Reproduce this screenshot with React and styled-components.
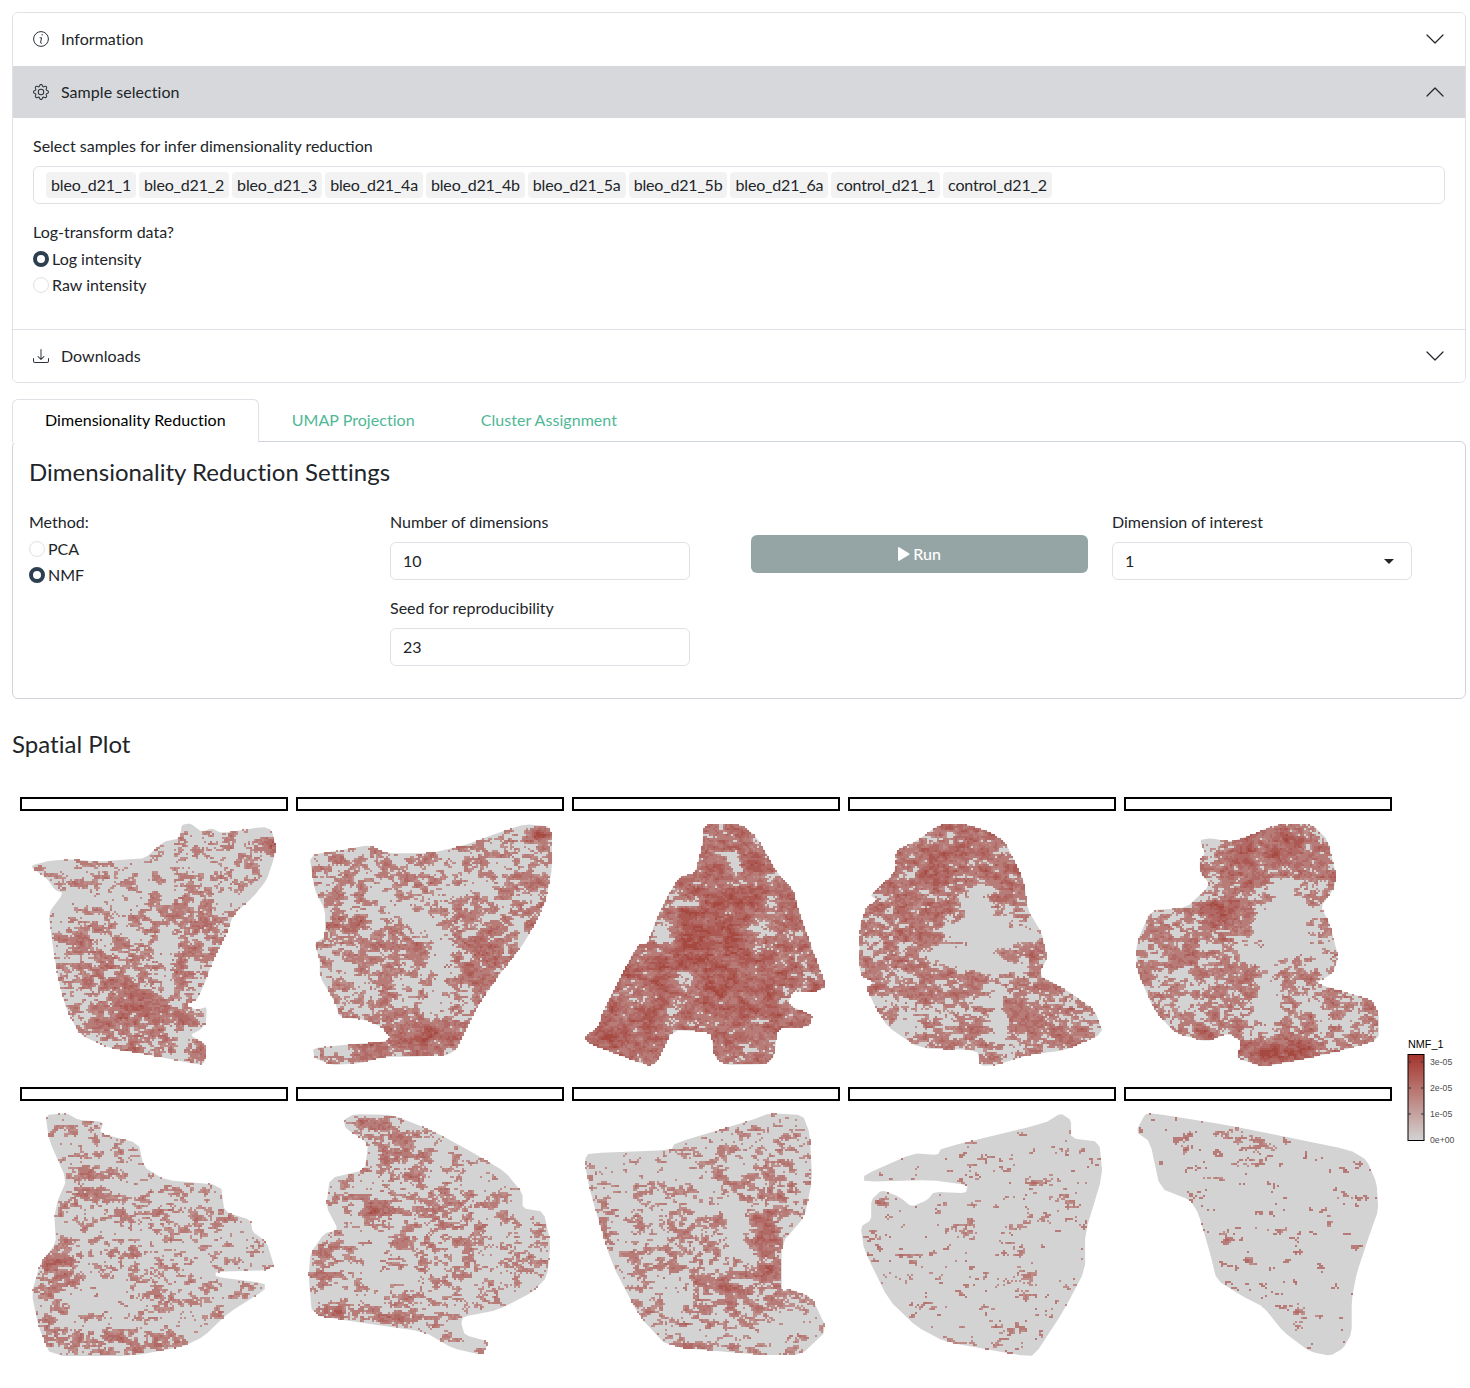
import React, { useMemo } from "react";
import styled, { createGlobalStyle } from "styled-components";
import { BsGear, BsDownload } from "react-icons/bs";

const Global = createGlobalStyle`
  html, body { margin: 0; padding: 0; background: #fff; }
  body { font-family: Lato, "Noto Sans", sans-serif; font-size: 16px; color: #212529; line-height: 1.5; }
  * { box-sizing: border-box; }
`;

const Page = styled.div`
  padding: 12px 4px 0 12px;
  width: 1470px;
  height: 1388px;
  overflow: hidden;
`;
const Accordion = styled.section`
  border: 1px solid #dee2e6;
  border-radius: 6px;
  overflow: hidden;
  background: #fff;
`;
const AccHeader = styled.div`
  display: flex;
  align-items: center;
  height: ${(p) => p.$h || 53}px;
  padding: 0 20px ${(p) => p.$pb || 0}px;
  background: ${(p) => (p.$active ? "#d6d8db" : "#fff")};
  color: #212529;
`;
const AccIcon = styled.span`
  display: flex;
  width: 16px;
  height: 16px;
  margin-right: 12px;
  font-size: 16px;
  color: #2b3238;
  svg { display: block; }
`;
const AccTitle = styled.span`
  flex: 1;
  letter-spacing: 0.05px;
`;
const Chevron = styled.svg`
  width: 20px;
  height: 20px;
  display: block;
`;
const AccBody = styled.div`
  padding: 16px 20px 0;
  height: 212px;
  border-bottom: 1px solid #dee2e6;
`;
const FieldLabel = styled.div`
  height: 24px;
  line-height: 24px;
  margin-bottom: ${(p) => p.$mb ?? 8}px;
`;
const ChipBox = styled.div`
  display: flex;
  align-items: center;
  gap: 3px;
  height: 38px;
  padding: 0 12px;
  border: 1px solid #dee2e6;
  border-radius: 6px;
  margin-bottom: 16px;
`;
const Chip = styled.span`
  height: 26px;
  line-height: 26px;
  padding: 0 5px;
  background: #f2f2f2;
  border-radius: 4px;
  white-space: nowrap;
  letter-spacing: -0.17px;
`;
const RadioRow = styled.label`
  display: flex;
  align-items: center;
  height: 26px;
  gap: 3px;
`;
const RadioDot = styled.span`
  width: 16px;
  height: 16px;
  border-radius: 50%;
  flex: none;
  background: #fff;
  border: ${(p) => (p.$on ? "4px solid #2c3e50" : "1px solid #dee2e6")};
`;
const TabBar = styled.nav`
  display: flex;
  margin-top: 16px;
  height: 43px;
  position: relative;
  z-index: 1;
  margin-bottom: -1px;
`;
const Tab = styled.div`
  padding: 0 32px;
  line-height: 40px;
  height: 44px;
  letter-spacing: 0.05px;
  border: 1px solid ${(p) => (p.$active ? "#dee2e6" : "transparent")};
  border-bottom-color: ${(p) => (p.$active ? "#fff" : "transparent")};
  border-radius: 6px 6px 0 0;
  background: ${(p) => (p.$active ? "#fff" : "transparent")};
  color: ${(p) => (p.$active ? "#000" : "#4fb896")};
`;
const SettingsBox = styled.section`
  height: 258px;
  border: 1px solid #ced4da;
  border-radius: 6px;
  padding: 15px 16px 16px;
`;
const SettingsTitle = styled.h3`
  margin: 0 0 24px;
  font-size: 24px;
  font-weight: 400;
  line-height: 29px;
  letter-spacing: 0.03px;
  color: #212529;
`;
const SettingsGrid = styled.div`
  display: grid;
  grid-template-columns: repeat(4, 337px);
  column-gap: 24px;
`;
const Column = styled.div`
  display: flex;
  flex-direction: column;
  align-items: flex-start;
`;
const RunColumn = styled(Column)`
  padding-top: 25px;
  align-items: stretch;
`;
const TextInput = styled.input`
  display: block;
  width: 300px;
  height: 38px;
  padding: 0 12px 2px;
  border: 1px solid #dee2e6;
  border-radius: 6px;
  font: inherit;
  color: #212529;
  outline: none;
  margin-bottom: 16px;
`;
const SelectBox = styled.div`
  display: flex;
  align-items: center;
  justify-content: space-between;
  width: 300px;
  height: 38px;
  padding: 0 12px;
  border: 1px solid #dee2e6;
  border-radius: 6px;
`;
const Caret = styled.span`
  width: 0;
  height: 0;
  border-left: 5px solid transparent;
  border-right: 5px solid transparent;
  border-top: 5px solid #212529;
  margin-right: 5px;
`;
const RunButton = styled.button`
  display: flex;
  align-items: center;
  justify-content: center;
  gap: 3px;
  height: 38px;
  border: 0;
  border-radius: 6px;
  background: #95a5a6;
  color: #fff;
  font: inherit;
  font-weight: 500;
`;
const PlotTitle = styled.h3`
  margin: 30px 0 0;
  font-size: 24px;
  font-weight: 400;
  line-height: 29px;
  letter-spacing: 0.03px;
  color: #212529;
`;
const PlotSvg = styled.svg`
  display: block;
  width: 1458px;
  height: 600px;
  margin-top: 22px;
`;
const StripRect = styled.rect`
  fill: #fff;
  stroke: #000;
  stroke-width: 2;
`;
const LegendTitle = styled.text`
  font-family: "Liberation Sans", Arial, sans-serif;
  font-size: 10.8px;
  fill: #000;
`;
const LegendLabel = styled.text`
  font-family: "Liberation Sans", Arial, sans-serif;
  font-size: 8.7px;
  fill: #4d4d4d;
`;

/* ---------- spatial plot data: outlines and hot spots read off the reference ---------- */
const NARROW = 2.851;
const O1 = [0, 790, 3], O2 = [290, 810, NARROW], O3 = [842, 810, NARROW], O4 = [14, 1100, NARROW], O5 = [566, 1100, NARROW], O6 = [1110, 1100, 3];
const PANELS = [
  { o: O1, base: 0.16, pts: [97,225,150,212,215,208,300,215,380,208,435,205,490,155,540,145,545,105,570,100,605,125,635,115,665,130,790,110,815,120,828,170,822,205,800,270,760,320,700,375,680,430,640,510,610,590,590,630,555,645,590,660,620,650,618,700,600,720,570,735,620,765,615,815,600,825,450,795,330,775,240,735,200,660,175,570,160,480,145,370,190,310,165,300,140,265,97,235],
    blobs: [[400,640,170,130,.55],[800,170,30,30,.7],[620,430,70,80,.35],[300,470,150,120,.12],[480,385,50,35,.5,30],[450,780,130,15,.4],[490,470,20,80,-.9],[460,375,25,10,-1.1,30],[570,240,200,60,-.05],[120,240,30,15,.15]] },
  { o: O2, base: 0.3, pts: [55,135,150,120,225,105,275,130,400,130,500,105,590,70,670,42,745,50,748,170,730,270,700,340,660,410,600,490,540,580,510,640,465,735,340,740,270,740,200,760,120,765,70,745,65,715,150,705,270,695,285,680,260,650,215,630,140,620,130,580,85,500,85,450,70,400,100,380,100,300,70,240],
    blobs: [[400,680,140,70,.6],[220,725,50,25,.5],[710,70,28,20,1],[560,430,90,110,.42],[150,340,60,30,.4],[300,400,120,70,.15],[430,460,28,90,-1],[300,290,110,22,-.6,35],[400,590,40,14,-.7],[90,730,40,20,-.1]] },
  { o: O2, base: 0.72, pts: [1180,42,1285,42,1330,80,1390,190,1435,240,1450,300,1490,420,1530,530,1500,545,1430,545,1420,585,1490,615,1480,650,1390,655,1380,740,1360,762,1240,765,1210,740,1200,665,1090,660,1045,760,1020,768,850,700,840,680,880,650,890,610,990,405,1020,400,1040,340,1075,260,1110,200,1155,190,1175,110],
    blobs: [[1200,360,120,130,.45],[1250,520,200,120,.2],[900,690,70,50,.3],[1265,165,18,30,-1.4],[1130,280,40,8,-1.4],[1060,370,30,40,-1.1],[1340,350,50,30,-.6],[1090,600,20,50,-1.1,10],[1130,510,25,60,-.4],[1340,630,30,10,-1],[1090,260,30,50,-.25]] },
  { o: O3, base: 0.42, pts: [280,42,350,42,420,65,465,95,500,170,520,220,530,300,570,370,585,445,560,495,640,540,720,600,745,670,640,720,530,735,440,765,395,768,385,720,220,715,130,650,95,590,70,535,90,515,50,495,50,350,70,290,100,270,80,255,150,190,155,120,210,95],
    blobs: [[330,150,180,120,.45],[200,330,140,90,.35],[300,510,120,40,.25],[500,630,100,60,.25],[390,300,40,100,-1.3,-10],[400,370,100,40,-1.3],[370,450,110,25,-1.3,10],[440,620,25,90,-1,-10],[200,610,100,50,-.2],[240,85,25,20,-.5]] },
  { o: O3, base: 0.42, pts: [1230,45,1340,42,1385,90,1410,200,1400,240,1365,290,1390,340,1415,440,1400,490,1350,520,1430,545,1510,570,1530,610,1530,690,1430,720,1330,745,1200,770,1125,745,1140,695,1100,670,1040,695,950,670,890,600,840,480,840,400,880,300,980,295,1050,225,1020,185,1020,150,1035,130,1020,90,1050,85,1110,95,1180,70],
    blobs: [[1220,130,180,90,.55],[1090,310,60,70,.6],[1250,720,130,40,.7],[1030,670,60,20,.5],[1270,300,40,100,-1.3,-10],[1250,370,90,50,-1.3,20],[1180,430,60,20,-1.2],[1210,590,28,70,-1.3,-5],[1340,590,60,15,-1.1,30],[940,560,100,70,-.2],[1040,130,30,40,-.6]] },
  { o: O4, base: 0.08, pts: [90,45,150,40,185,60,255,65,245,100,355,130,370,200,430,240,590,255,600,335,675,360,680,395,720,425,745,510,575,515,575,530,715,550,715,570,610,640,540,710,480,740,340,768,105,768,70,680,50,580,75,490,120,430,115,350,125,300,150,240,100,120],
    blobs: [[120,500,60,50,.5],[210,250,50,50,.4],[340,730,110,35,.5],[330,340,160,40,.25],[320,460,80,25,.4],[440,580,50,30,.4],[100,640,50,100,.25],[200,700,50,30,.3],[250,600,60,50,-.3],[600,440,100,60,-.12]] },
  { o: O4, base: 0.1, pts: [940,60,970,42,1080,45,1200,95,1320,165,1400,215,1450,280,1450,325,1510,335,1530,430,1520,530,1480,575,1380,630,1280,650,1275,670,1285,705,1355,725,1335,765,1250,745,1170,695,1000,670,850,645,840,530,845,460,885,400,925,390,890,320,900,235,1000,210,1010,130,945,85],
    blobs: [[1030,340,50,40,.7],[900,630,70,20,.6],[1100,650,150,15,.55],[880,500,30,120,.35],[1100,170,70,80,.45],[1000,70,40,20,.35],[1130,420,70,25,.55],[1250,350,110,70,.3],[1380,590,25,20,.55],[1250,520,70,40,.3],[1030,450,25,55,-.6,-30],[1300,140,110,60,-.15],[1040,540,40,40,-.3]] },
  { o: O5, base: 0.12, pts: [55,175,65,160,300,150,310,130,530,60,580,40,675,45,695,100,702,240,680,350,615,430,615,580,630,565,700,590,745,690,670,765,560,765,290,740,210,650,130,490,70,280,55,200],
    blobs: [[580,420,60,140,.7],[450,540,100,70,.45],[550,260,100,40,.25],[330,400,130,100,.15],[400,740,150,15,.45],[290,620,200,100,.1],[680,630,20,20,.2],[480,400,22,100,-1],[470,325,70,15,-.8],[510,540,20,8,-1],[600,690,130,50,-.25],[200,220,130,60,-.12]] },
  { o: O5, base: -0.12, pts: [850,225,990,160,1060,165,1070,145,1365,70,1410,40,1440,60,1440,115,1520,125,1530,225,1480,400,1480,510,1420,630,1335,768,1290,765,1080,725,1000,680,920,600,850,450,840,380,870,360,870,300,900,270,950,290,985,320,1030,300,1050,275,1140,280,1145,255,1040,240,850,245],
    blobs: [[1080,530,120,12,.35],[1070,620,90,10,.35],[1160,730,100,10,.35],[1320,370,40,40,.3],[1300,530,40,80,.25],[1400,130,30,25,.35],[1330,230,30,20,.45],[1430,280,60,25,.3],[895,305,14,12,.8],[1020,220,30,5,.35],[1160,310,20,5,.45],[1130,440,30,60,.15]] },
  { o: O6, base: -0.2, pts: [78,95,105,42,130,40,350,75,500,105,720,150,770,180,800,250,805,330,780,400,740,520,725,600,725,700,700,745,660,768,600,755,520,695,460,620,400,590,320,540,300,460,265,340,240,300,150,265,120,125],
    blobs: [[390,110,120,22,.65,12],[220,150,12,20,.55],[430,190,50,12,.45],[690,290,35,10,.55],[580,640,35,55,.55],[480,385,60,6,.5],[415,480,15,10,.75],[630,270,7,40,.4,-15],[650,370,8,30,.4,15],[340,400,8,40,.35,-30],[320,230,40,7,.4]] },
];

const hash = (x, y, s) => {
  const h = Math.sin(x * 127.1 + y * 311.7 + s * 74.7) * 43758.5453;
  return h - Math.floor(h);
};
const vnoise = (x, y, s) => {
  const ix = Math.floor(x), iy = Math.floor(y);
  const fx = x - ix, fy = y - iy;
  const u = fx * fx * (3 - 2 * fx), v = fy * fy * (3 - 2 * fy);
  const a = hash(ix, iy, s), b = hash(ix + 1, iy, s), c = hash(ix, iy + 1, s), d = hash(ix + 1, iy + 1, s);
  return a + (b - a) * u + (c - a) * v + (a - b - c + d) * u * v;
};
const inside = (pts, x, y) => {
  let r = false;
  const n = pts.length / 2;
  for (let i = 0, j = n - 1; i < n; j = i++) {
    const xi = pts[2 * i], yi = pts[2 * i + 1], xj = pts[2 * j], yj = pts[2 * j + 1];
    if (yi > y !== yj > y && x < ((xj - xi) * (y - yi)) / (yj - yi) + xi) r = !r;
  }
  return r;
};
/* corner-cutting, so the hand-read outlines come out rounded as in the plot */
const smooth = (pts) => {
  const out = [];
  const n = pts.length / 2;
  for (let i = 0; i < n; i++) {
    const j = (i + 1) % n;
    const [ax, ay, bx, by] = [pts[2 * i], pts[2 * i + 1], pts[2 * j], pts[2 * j + 1]];
    out.push(ax * 0.85 + bx * 0.15, ay * 0.85 + by * 0.15, ax * 0.15 + bx * 0.85, ay * 0.15 + by * 0.85);
  }
  return out;
};

const LEVELS = 8;
const levelColor = (l) => {
  const t = (l + 1) / LEVELS;
  const mix = (a, b) => Math.round(a + (b - a) * t);
  return `rgb(${mix(211, 166)},${mix(211, 72)},${mix(211, 64)})`;
};

function buildPanel(panel, seed) {
  const { o, pts, base, blobs } = panel;
  const sx = o[2];
  let page = [];
  for (let i = 0; i < pts.length; i += 2) page.push(o[0] + pts[i] / sx, o[1] + pts[i + 1] / 3);
  page = smooth(page);
  const xs = page.filter((_, i) => i % 2 === 0), ys = page.filter((_, i) => i % 2 === 1);
  const x0 = Math.floor(Math.min(...xs)), x1 = Math.ceil(Math.max(...xs));
  const y0 = Math.floor(Math.min(...ys)), y1 = Math.ceil(Math.max(...ys));
  const parsed = blobs.map(([cx, cy, rx, ry, amp, ang = 0]) => {
    const a = (ang * Math.PI) / 180;
    return { cx: o[0] + cx / sx, cy: o[1] + cy / 3, rx: rx / 3, ry: ry / 3, amp, c: Math.cos(a), s: Math.sin(a) };
  });
  const paths = Array.from({ length: LEVELS }, () => "");
  const STEP = 2;
  for (let y = y0; y < y1; y += STEP) {
    let runL = -1, runS = 0;
    const flush = (end) => {
      if (runL >= 0) paths[runL] += `M${runS} ${y}h${end - runS}v${STEP}h${runS - end}z`;
    };
    let x = x0;
    for (; x < x1; x += STEP) {
      let l = -1;
      if (inside(page, x + 1, y + 1)) {
        let v = base;
        for (const b of parsed) {
          const dx = x - b.cx, dy = y - b.cy;
          const u = (dx * b.c + dy * b.s) / b.rx, w = (-dx * b.s + dy * b.c) / b.ry;
          v += b.amp * Math.exp(-(u * u + w * w));
        }
        const n =
          0.36 * vnoise(x / 12, y / 7, seed) +
          0.34 * vnoise(x / 5, y / 3, seed + 3) +
          0.2 * vnoise(x / 2.5, y / 1.7, seed + 5) +
          0.1 * hash(x, y, seed + 9);
        if (v + (n - 0.5) * 2.4 > 0.3) {
          const t = 0.32 + 0.42 * Math.max(0, v) + (n - 0.5) * 0.9;
          l = Math.max(0, Math.min(LEVELS - 1, Math.floor(t * LEVELS)));
        }
      }
      if (l !== runL) {
        flush(x);
        runL = l;
        runS = x;
      }
    }
    flush(x);
  }
  return { polygon: page.map((n) => n.toFixed(1)).join(" "), paths };
}

const STRIP_X = [20, 296, 572, 848, 1124];
const STRIP_Y = [798, 1088];

function SpatialPlot() {
  const built = useMemo(() => PANELS.map((p, i) => buildPanel(p, i + 1)), []);
  return (
    <PlotSvg viewBox="12 780 1458 600" xmlns="http://www.w3.org/2000/svg">
      <defs>
        <filter id="soft" x="0" y="0" width="100%" height="100%">
          <feGaussianBlur stdDeviation="0.55" />
        </filter>
        <linearGradient id="bar" x1="0" y1="1" x2="0" y2="0">
          <stop offset="0" stopColor="#d3d3d3" />
          <stop offset="1" stopColor="#a5342c" />
        </linearGradient>
      </defs>
      {STRIP_Y.map((y) =>
        STRIP_X.map((x) => <StripRect key={`${x}-${y}`} x={x + 1} y={y} width={266} height={12} />)
      )}
      <g filter="url(#soft)">
        {built.map((b, i) => (
          <g key={i}>
            <polygon points={b.polygon} fill="#d3d3d3" />
            {b.paths.map((d, l) => (d ? <path key={l} d={d} fill={levelColor(l)} /> : null))}
          </g>
        ))}
      </g>
      <LegendTitle x="1408" y="1048">NMF_1</LegendTitle>
      <rect x="1408" y="1054.5" width="16" height="86" fill="url(#bar)" stroke="#000" strokeWidth="1" />
      {[1062, 1088, 1114].map((y) => (
        <g key={y} stroke="#333" strokeWidth="1">
          <line x1="1408" x2="1411" y1={y} y2={y} />
          <line x1="1421" x2="1424" y1={y} y2={y} />
        </g>
      ))}
      <LegendLabel x="1430" y="1065">3e-05</LegendLabel>
      <LegendLabel x="1430" y="1091">2e-05</LegendLabel>
      <LegendLabel x="1430" y="1117">1e-05</LegendLabel>
      <LegendLabel x="1430" y="1143">0e+00</LegendLabel>
    </PlotSvg>
  );
}

const ChevronIcon = ({ up }) => (
  <Chevron viewBox="0 0 20 20" fill="none" stroke="#212529" strokeWidth="1.2" strokeLinecap="round" strokeLinejoin="round">
    <path d={up ? "M2 14l8-8 8 8" : "M2 6l8 8 8-8"} />
  </Chevron>
);
const InfoIcon = () => (
  <svg viewBox="0 0 16 16" width="16" height="16" fill="none" stroke="#2b3238">
    <circle cx="8" cy="8" r="7.4" strokeWidth="1" />
    <path d="M8.7 3.700h.9" strokeWidth="1.4" />
    <path d="M6.700 6.800h1.900l-1 4.500c-.1.6.100.9.6.9h.9" strokeWidth="1" />
  </svg>
);
const PlayIcon = () => (
  <svg viewBox="0 0 12 14" width="12" height="14" fill="#fff">
    <path d="M1.200.2C.6-.1 0 .3 0 1v12c0 .7.6 1.100 1.200.8l10-6c.5-.3.5-1.100 0-1.400z" />
  </svg>
);

const SAMPLES = ["bleo_d21_1","bleo_d21_2","bleo_d21_3","bleo_d21_4a","bleo_d21_4b","bleo_d21_5a","bleo_d21_5b","bleo_d21_6a","control_d21_1","control_d21_2"];

export default function App() {
  return (
    <Page>
      <Global />
      <Accordion>
        <AccHeader $pb={1}>
          <AccIcon><InfoIcon /></AccIcon>
          <AccTitle>Information</AccTitle>
          <ChevronIcon />
        </AccHeader>
        <AccHeader $active $h={52}>
          <AccIcon><BsGear /></AccIcon>
          <AccTitle>Sample selection</AccTitle>
          <ChevronIcon up />
        </AccHeader>
        <AccBody>
          <FieldLabel>Select samples for infer dimensionality reduction</FieldLabel>
          <ChipBox>
            {SAMPLES.map((s) => <Chip key={s}>{s}</Chip>)}
          </ChipBox>
          <FieldLabel $mb={2}>Log-transform data?</FieldLabel>
          <RadioRow><RadioDot $on />Log intensity</RadioRow>
          <RadioRow><RadioDot />Raw intensity</RadioRow>
        </AccBody>
        <AccHeader $h={52}>
          <AccIcon><BsDownload /></AccIcon>
          <AccTitle>Downloads</AccTitle>
          <ChevronIcon />
        </AccHeader>
      </Accordion>

      <TabBar>
        <Tab $active>Dimensionality Reduction</Tab>
        <Tab>UMAP Projection</Tab>
        <Tab>Cluster Assignment</Tab>
      </TabBar>
      <SettingsBox>
        <SettingsTitle>Dimensionality Reduction Settings</SettingsTitle>
        <SettingsGrid>
          <Column>
            <FieldLabel $mb={2}>Method:</FieldLabel>
            <RadioRow><RadioDot />PCA</RadioRow>
            <RadioRow><RadioDot $on />NMF</RadioRow>
          </Column>
          <Column>
            <FieldLabel>Number of dimensions</FieldLabel>
            <TextInput readOnly value="10" />
            <FieldLabel>Seed for reproducibility</FieldLabel>
            <TextInput readOnly value="23" />
          </Column>
          <RunColumn>
            <RunButton type="button"><PlayIcon />Run</RunButton>
          </RunColumn>
          <Column>
            <FieldLabel>Dimension of interest</FieldLabel>
            <SelectBox>1<Caret /></SelectBox>
          </Column>
        </SettingsGrid>
      </SettingsBox>

      <PlotTitle>Spatial Plot</PlotTitle>
      <SpatialPlot />
    </Page>
  );
}
